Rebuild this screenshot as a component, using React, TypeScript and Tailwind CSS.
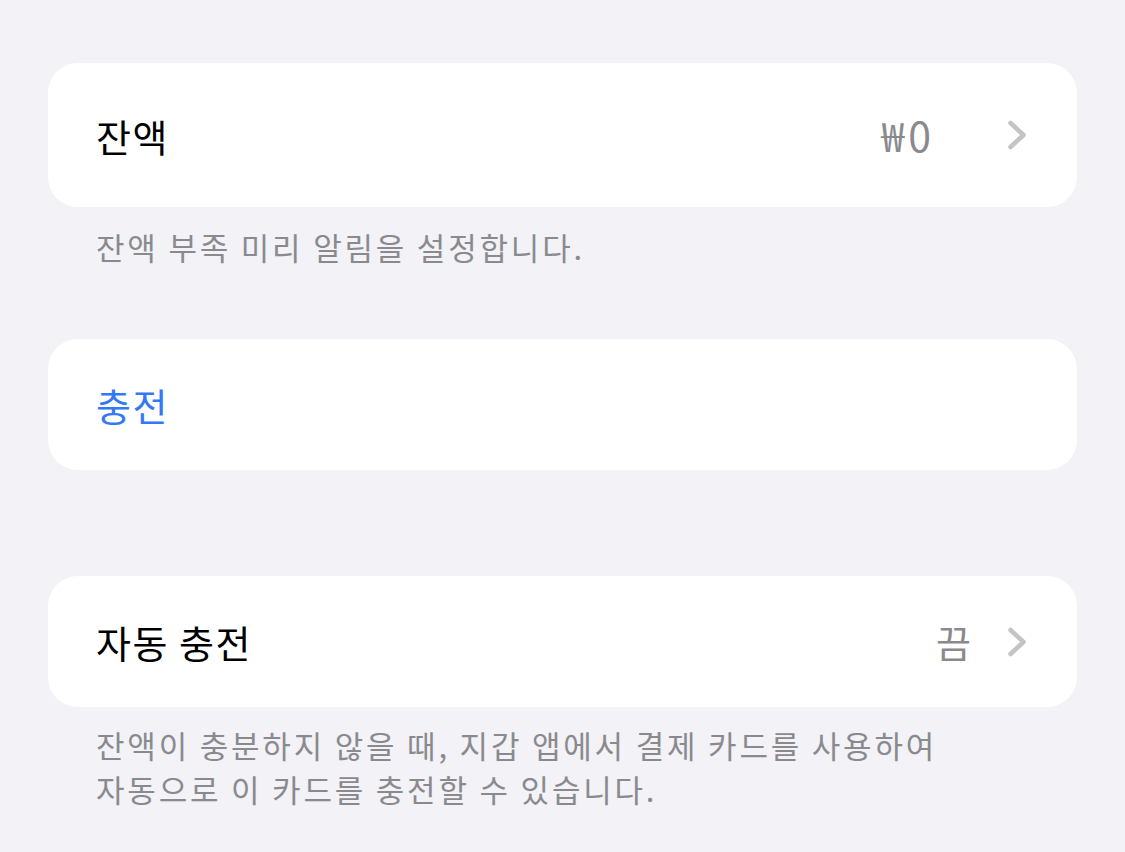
import React from "react";

const font = { fontFamily: '"Noto Sans CJK KR", "Noto Sans", sans-serif' };

function Chevron() {
  return (
    <svg width="21" height="30" viewBox="0 0 21 30" fill="none" className="shrink-0">
      <path d="M3.5 3 L16.5 15 L3.5 27" stroke="#c4c4c7" strokeWidth="4.5" strokeLinecap="round" strokeLinejoin="round" />
    </svg>
  );
}

export default function App() {
  return (
    <div className="min-h-[852px] w-full bg-[#f2f2f7] px-[48px] pt-[63px]" style={font}>
      <div className="flex h-[144px] items-center rounded-[30px] bg-white pl-[48px] pr-[49px]">
        <span className="flex-1 text-[38px] tracking-[1.5px] text-black">잔액</span>
        <span className="mr-[72px] text-[41px] tracking-[4px] text-[#8a8a8e]">₩0</span>
        <Chevron />
      </div>
      <div className="px-[48px] pt-[18px] text-[31px] leading-[44px] tracking-[2.8px] text-[#8a8a8e]">
        잔액 부족 미리 알림을 설정합니다.
      </div>
      <div className="mt-[70px] flex h-[131px] items-center rounded-[30px] bg-white px-[48px]">
        <span className="text-[38px] tracking-[1.5px] text-[#3478f6]">충전</span>
      </div>
      <div className="mt-[106px] flex h-[131px] items-center rounded-[30px] bg-white pl-[48px] pr-[49px]">
        <span className="flex-1 text-[38px] tracking-[1.5px] text-black">자동 충전</span>
        <span className="mr-[36px] text-[38px] text-[#8a8a8e]">끔</span>
        <Chevron />
      </div>
      <div className="px-[48px] pt-[16px] text-[31px] leading-[44px] tracking-[2.8px] text-[#8a8a8e]">
        잔액이 충분하지 않을 때, 지갑 앱에서 결제 카드를 사용하여
        <br />
        자동으로 이 카드를 충전할 수 있습니다.
      </div>
    </div>
  );
}
